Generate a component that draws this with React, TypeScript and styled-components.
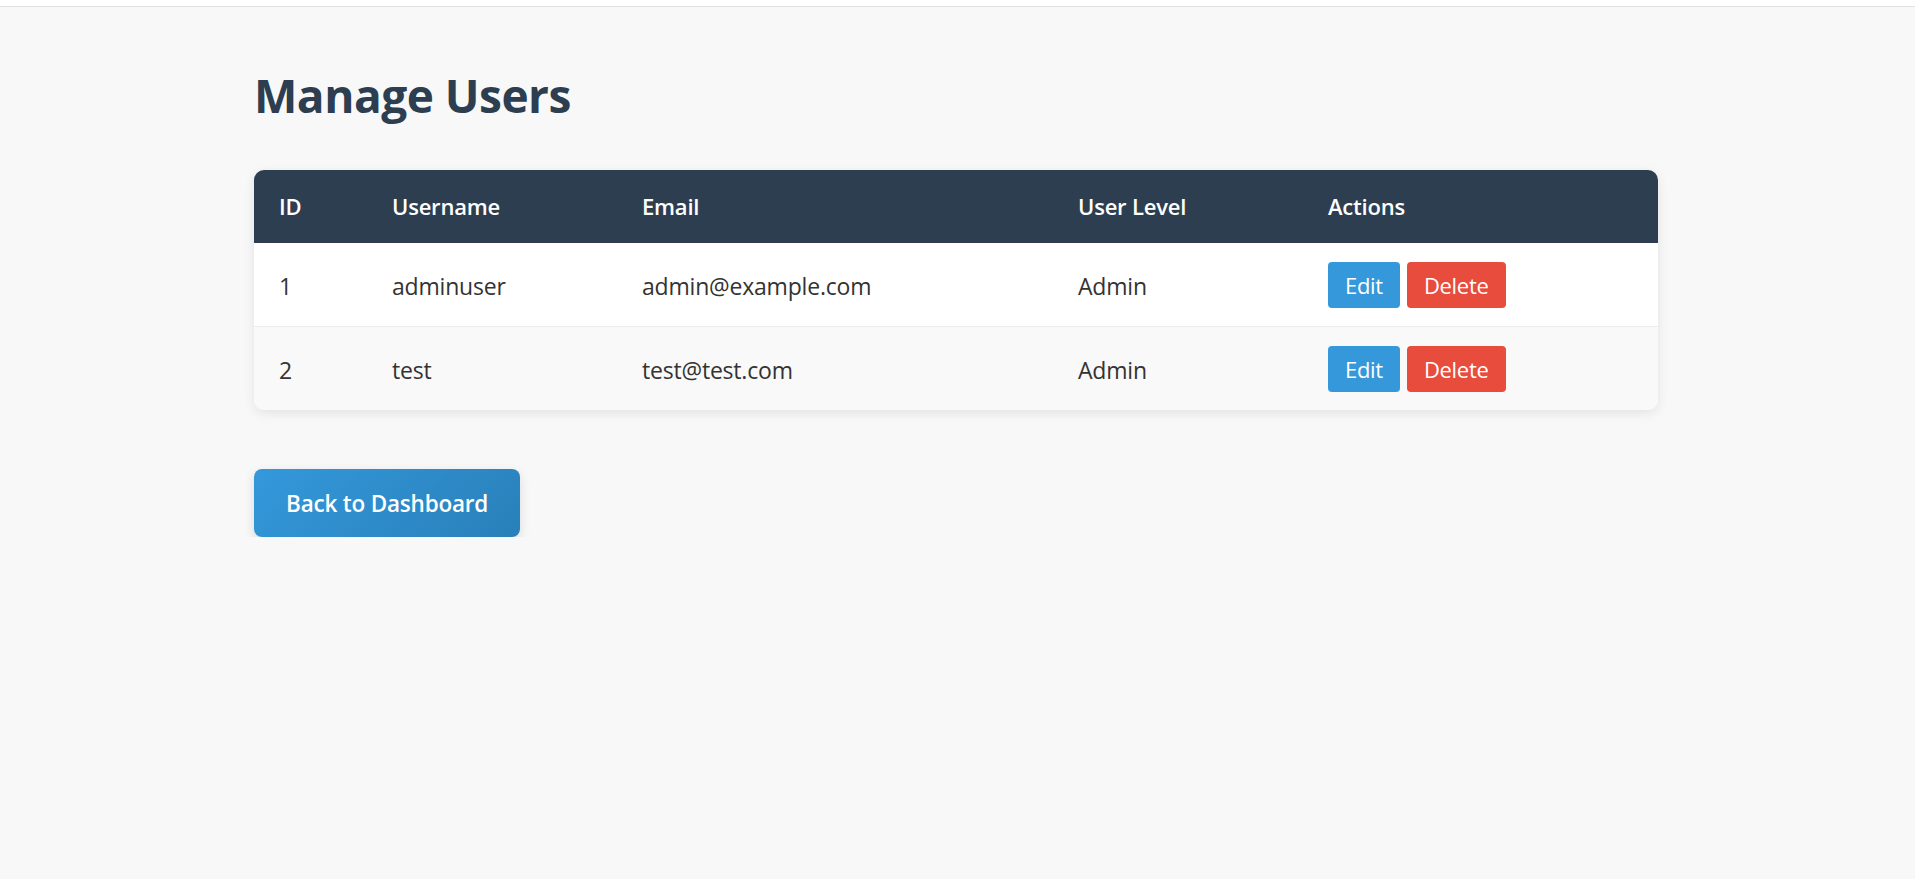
import React from "react";
import styled, { createGlobalStyle } from "styled-components";

const Global = createGlobalStyle`
  html, body {
    margin: 0;
    padding: 0;
    background: #f8f8f8;
    font-family: "Open Sans", "Noto Sans", sans-serif;
    color: #333;
  }
`;

const TopStrip = styled.div`
  height: 6px;
  background: #ffffff;
  border-bottom: 1px solid #e2e2e2;
`;

const Container = styled.main`
  width: 1404px;
  margin: 0 auto;
  padding: 61px 3px 0 0;
`;

const Title = styled.h1`
  margin: 0 0 48px 0;
  font-size: 46px;
  line-height: 54px;
  font-weight: 700;
  color: #2c3e50;
  letter-spacing: -0.5px;
`;

const TableCard = styled.div`
  background: #ffffff;
  border-radius: 10px;
  overflow: hidden;
  box-shadow: 0 3px 12px rgba(0, 0, 0, 0.09);
`;

const Table = styled.table`
  width: 100%;
  border-collapse: collapse;
  table-layout: fixed;
`;

const Th = styled.th`
  background: #2c3e50;
  color: #ffffff;
  text-align: left;
  font-size: 22px;
  font-weight: 600;
  line-height: 31px;
  padding: 21px 25px;
  letter-spacing: -0.2px;
`;

const Row = styled.tr<{ $alt?: boolean; $last?: boolean }>`
  background: ${(p) => (p.$alt ? "#f9f9f9" : "#ffffff")};
  border-bottom: ${(p) => (p.$last ? "none" : "1px solid #ececec")};
`;

const Td = styled.td`
  padding: 20px 25px 17px;
  font-size: 23px;
  line-height: 46px;
  color: #333;
  letter-spacing: -0.2px;
`;

const ActionTd = styled.td`
  padding: 19px 25px 18px;
  line-height: 46px;
`;

const Actions = styled.div`
  display: flex;
  gap: 7px;
`;

const SmallButton = styled.button<{ $variant: "edit" | "delete" }>`
  height: 46px;
  padding: 0 17px;
  border: none;
  border-radius: 4px;
  font-family: inherit;
  font-size: 22px;
  color: #ffffff;
  letter-spacing: -0.3px;
  background: ${(p) => (p.$variant === "edit" ? "#3498db" : "#e74c3c")};
  cursor: pointer;
`;

const BackButton = styled.button`
  margin-top: 59px;
  height: 68px;
  padding: 0 32px;
  border: none;
  border-radius: 8px;
  font-family: inherit;
  font-size: 22.5px;
  font-weight: 600;
  color: #ffffff;
  letter-spacing: -0.2px;
  background: linear-gradient(135deg, #3498db, #2980b9);
  box-shadow: 0 4px 12px rgba(0, 0, 0, 0.12);
  cursor: pointer;
`;

const users = [
  { id: 1, username: "adminuser", email: "admin@example.com", level: "Admin" },
  { id: 2, username: "test", email: "test@test.com", level: "Admin" },
];

export default function App() {
  return (
    <>
      <Global />
      <TopStrip />
      <Container>
        <Title>Manage Users</Title>
        <TableCard>
          <Table>
            <colgroup>
              <col style={{ width: 113 }} />
              <col style={{ width: 250 }} />
              <col style={{ width: 436 }} />
              <col style={{ width: 250 }} />
              <col />
            </colgroup>
            <thead>
              <tr>
                <Th>ID</Th>
                <Th>Username</Th>
                <Th>Email</Th>
                <Th>User Level</Th>
                <Th>Actions</Th>
              </tr>
            </thead>
            <tbody>
              {users.map((u, i) => (
                <Row key={u.id} $alt={i % 2 === 1} $last={i === users.length - 1}>
                  <Td>{u.id}</Td>
                  <Td>{u.username}</Td>
                  <Td>{u.email}</Td>
                  <Td>{u.level}</Td>
                  <ActionTd>
                    <Actions>
                      <SmallButton $variant="edit">Edit</SmallButton>
                      <SmallButton $variant="delete">Delete</SmallButton>
                    </Actions>
                  </ActionTd>
                </Row>
              ))}
            </tbody>
          </Table>
        </TableCard>
        <BackButton>Back to Dashboard</BackButton>
      </Container>
    </>
  );
}
